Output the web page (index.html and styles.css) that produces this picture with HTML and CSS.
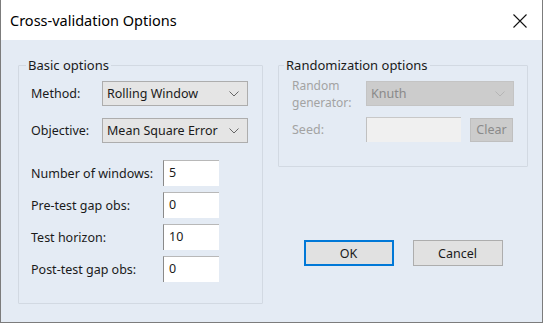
FILE: index.html
```html
<!DOCTYPE html>
<html lang="en">
<head>
    <meta charset="UTF-8">
    <title>Cross-validation Options</title>
    <link rel="stylesheet" href="styles.css">
</head>
<body>
    <div class="window">
        <div class="titlebar">
            <span class="title">Cross-validation Options</span>
            <svg class="close" width="14" height="14" viewBox="0 0 14 14">
                <path d="M0.5 0.5 L13.5 13.5 M13.5 0.5 L0.5 13.5" stroke="#111" stroke-width="1.1" fill="none"/>
            </svg>
        </div>

        <div class="content">
            <fieldset class="group basic">
                <legend>Basic options</legend>

                <div class="row select-row">
                    <label>Method:</label>
                    <div class="select">
                        <span>Rolling Window</span>
                        <svg class="chevron" width="10" height="6" viewBox="0 0 10 6"><path d="M0.5 0.5 L5 5 L9.5 0.5" stroke="#666" fill="none"/></svg>
                    </div>
                </div>

                <div class="row select-row objective">
                    <label>Objective:</label>
                    <div class="select">
                        <span>Mean Square Error</span>
                        <svg class="chevron" width="10" height="6" viewBox="0 0 10 6"><path d="M0.5 0.5 L5 5 L9.5 0.5" stroke="#666" fill="none"/></svg>
                    </div>
                </div>

                <div class="numbers">
                    <div class="row num-row">
                        <label>Number of windows:</label>
                        <div class="edit">5</div>
                    </div>
                    <div class="row num-row">
                        <label>Pre-test gap obs:</label>
                        <div class="edit">0</div>
                    </div>
                    <div class="row num-row">
                        <label>Test horizon:</label>
                        <div class="edit">10</div>
                    </div>
                    <div class="row num-row">
                        <label>Post-test gap obs:</label>
                        <div class="edit">0</div>
                    </div>
                </div>
            </fieldset>

            <div class="side">
                <fieldset class="group random">
                    <legend>Randomization options</legend>

                    <div class="row">
                        <label class="disabled two-line">Random<br>generator:</label>
                        <div class="select is-disabled">
                            <span>Knuth</span>
                            <svg class="chevron" width="10" height="6" viewBox="0 0 10 6"><path d="M0.5 0.5 L5 5 L9.5 0.5" stroke="#b5b5b5" fill="none"/></svg>
                        </div>
                    </div>

                    <div class="row seed-row">
                        <label class="disabled">Seed:</label>
                        <div class="edit is-disabled"></div>
                        <div class="btn small is-disabled">Clear</div>
                    </div>
                </fieldset>

                <div class="buttons">
                    <div class="btn primary">OK</div>
                    <div class="btn">Cancel</div>
                </div>
            </div>
        </div>
    </div>
</body>
</html>
```

FILE: styles.css
```css
:root {
    --panel-bg: #e4ebf4;
    --group-line: #d2d9e2;
    --disabled-text: #a3a3a3;
    --text-color: #1a1a1a;
}

* {
    margin: 0;
    padding: 0;
    box-sizing: border-box;
}

body {
    background-color: #ffffff;
    font-family: "Noto Sans", "Open Sans", sans-serif;
    font-size: 12.5px;
    color: var(--text-color);
}

.window {
    width: 543px;
    height: 323px;
    border: 1px solid #7c7c7c;
    border-top: none;
    background-color: var(--panel-bg);
    display: flex;
    flex-direction: column;
}

.titlebar {
    height: 40px;
    background-color: #ffffff;
    display: flex;
    align-items: center;
    justify-content: space-between;
    padding: 0 15px 0 9px;
}

.title {
    font-size: 14.5px;
    color: #000;
}

.close {
    display: block;
    margin-top: 1px;
}

.content {
    display: flex;
    padding: 17px 0 0 17px;
    gap: 15px;
}

.group {
    border: 1px solid var(--group-line);
    border-radius: 1px;
}

.group legend {
    padding: 0 2px;
    margin-left: -5px;
    line-height: 16px;
    font-size: 13px;
    color: var(--text-color);
}

.basic {
    width: 245px;
    height: 247px;
    padding: 8px 14px 0 12px;
}

.row {
    display: flex;
    align-items: center;
}

.row label {
    white-space: nowrap;
}

.select-row label {
    width: 71px;
}

.select-row.objective {
    margin-top: 12px;
}

.select {
    flex: 1;
    height: 25px;
    background-color: #e5e5e5;
    border: 1px solid #adadad;
    display: flex;
    align-items: center;
    justify-content: space-between;
    padding: 0 8px 0 4px;
}

.numbers {
    margin-top: 17px;
    display: flex;
    flex-direction: column;
    gap: 6px;
}

.num-row label {
    width: 132px;
}

.edit {
    width: 56px;
    height: 26px;
    background-color: #ffffff;
    border-left: 1px solid #8a8a8a;
    border-top: 1px solid #b8b8b8;
    padding: 2px 0 0 5px;
    line-height: 20px;
}

.side {
    display: flex;
    flex-direction: column;
}

.random {
    width: 250px;
    height: 110px;
    padding: 8px 13px 0 13px;
}

.random legend {
    margin-left: -8px;
}

.random .row label {
    width: 74px;
}

.disabled {
    color: var(--disabled-text);
}

.two-line {
    font-size: 12px;
    line-height: 16.5px;
    margin: -3px 0 -5px;
}

.select.is-disabled {
    background-color: #cccccc;
    border-color: #c4c4c4;
    color: #8a8a8a;
}

.seed-row {
    margin-top: 11px;
}

.edit.is-disabled {
    width: 95px;
    height: 25px;
    background-color: #f0f0f0;
    border-top-color: #c8c8c8;
    border-left-color: #c0c0c0;
}

.btn {
    width: 90px;
    height: 26px;
    background-color: #e1e1e1;
    border: 1px solid #adadad;
    display: flex;
    align-items: center;
    justify-content: center;
}

.btn.small {
    width: 43px;
    height: 24px;
    margin-left: 9px;
}

.btn.is-disabled {
    background-color: #cccccc;
    border-color: #bfbfbf;
    color: #8a8a8a;
}

.btn.primary {
    border: 2px solid #0078d7;
}

.buttons {
    margin-top: 73px;
    display: flex;
    justify-content: center;
    gap: 19px;
}
```
